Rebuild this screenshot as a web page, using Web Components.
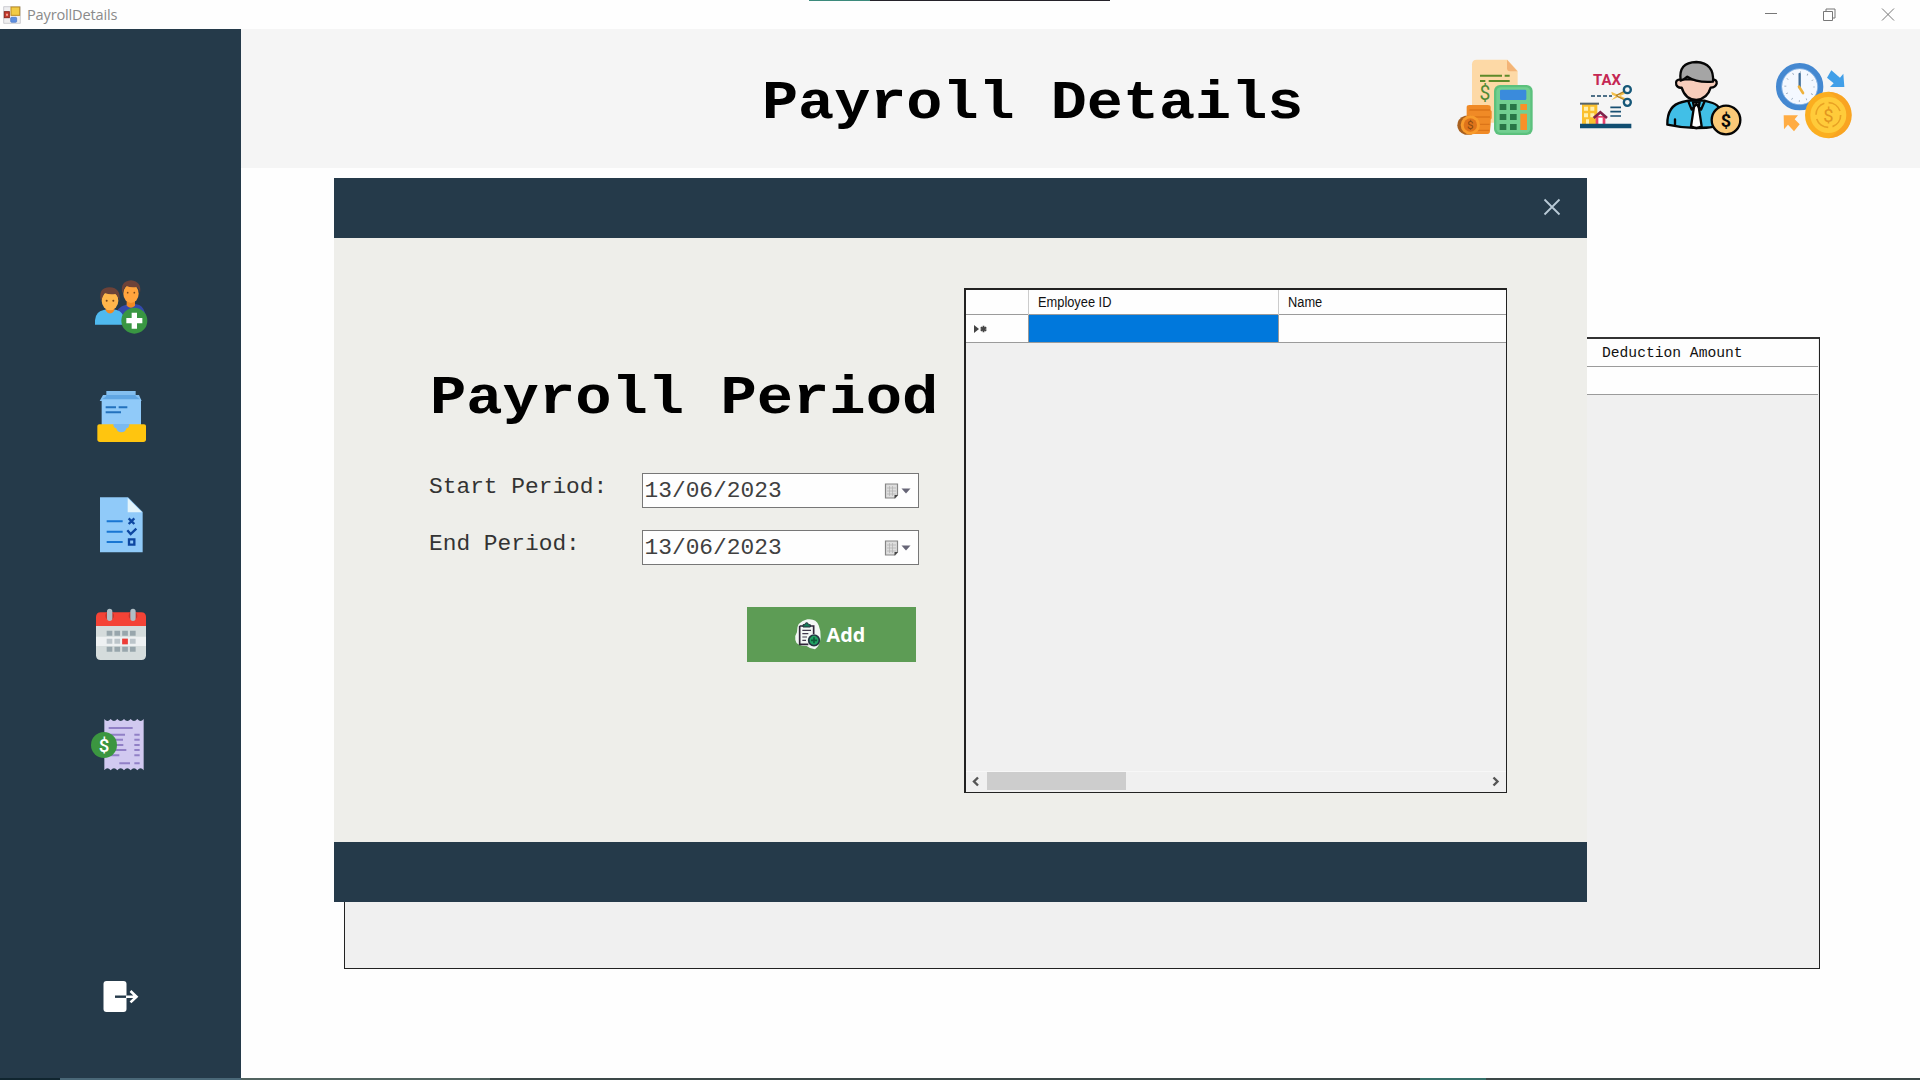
<!DOCTYPE html>
<html lang="en">
<head>
<meta charset="utf-8">
<title>PayrollDetails</title>
<style>
html,body{margin:0;width:1920px;height:1080px;overflow:hidden;background:#fefefe}
</style>
</head>
<body>
<payroll-app></payroll-app>
<script>
const define = (name, html) => customElements.define(name, class extends HTMLElement {
  constructor() {
    super();
    const t = document.createElement('template');
    t.innerHTML = html;
    this.attachShadow({mode: 'open'}).append(t.content.cloneNode(true));
  }
});

define('window-bar', `
<style>
:host{display:flex;align-items:center;height:29px;background:#fefefe;position:relative;box-sizing:border-box;padding-left:3px;font:14.6px/29px "Open Sans",sans-serif;color:#8a8a8a}
.logo{width:18px;height:18px;margin-right:6px}
.t{letter-spacing:-.17px}
.ctl{margin-left:auto;display:flex;margin-right:3px}
.edge{position:absolute;left:809px;top:0;width:301px;height:1px;background:linear-gradient(90deg,#3c8a7c 61px,#25222a 61px)}
</style>
<svg class="logo" viewBox="0 0 54 54"><path d="M2 2h50v50H2z" fill="#eeeef0" stroke="#b9b9c0" stroke-width="2"/><rect x="24" y="3" width="26" height="25" fill="#f1cb45" stroke="#bd8d23" stroke-width="3"/><rect x="4" y="17" width="15" height="18" fill="#c93a2c" stroke="#8b2a22" stroke-width="3"/><path d="M9 23h6v6H9z" fill="#f4a79a"/><rect x="23" y="34" width="18" height="15" rx="3" fill="#5e8fe0" stroke="#4774c4" stroke-width="2"/></svg>
<span class="t"><slot></slot></span>
<svg class="ctl" width="174" height="29" viewBox="0 0 174 29" fill="none" stroke="#777" stroke-width="1"><path d="M22 13.500h12M139 8.500l12 12M151 8.500l-12 12"/><path d="M80.500 11.500h9v9h-9zM83 11.500v-2.500h9v9h-2.500"/></svg>
<div class="edge"></div>`);

define('side-nav', `
<style>
:host{display:flex;flex-direction:column;width:241px;height:1051px;background:#253a4a;box-sizing:border-box;padding:223px 0 0 80px}
svg{display:block;width:90px;height:110px;flex:none}
.exit{margin-top:159px}
</style>
<svg viewBox="0 -24 270 330">
<path d="M108 188v-20q2-28 30-34l18-4 22 5q16 8 19 35z" fill="#3449ab"/>
<path d="M140 118h25v19q-12 12-25 0z" fill="#f18a25"/><ellipse cx="153" cy="101" rx="23" ry="28" fill="#ffa43d"/>
<path d="M127 100q-8-36 26-39 33 4 27 38-3-14-10-18-18 3-32-4-7 8-11 23z" fill="#6d4238"/>
<circle cx="143" cy="98" r="2.500" fill="#784719"/><circle cx="163" cy="98" r="2.500" fill="#784719"/>
<path d="M45 194v-13q2-27 26-31l19-4 20 4q20 5 24 31v13z" fill="#4fb9ef"/>
<path d="M77 138h26v14q-13 17-26 0z" fill="#f48921"/><ellipse cx="90" cy="122" rx="25" ry="29" fill="#ffb64b"/>
<path d="M63 123q-10-40 26-41 35 2 29 40-4-15-12-20-17 3-32-3-6 8-11 24z" fill="#6d4238"/>
<circle cx="80" cy="122" r="3" fill="#784719"/><circle cx="100" cy="122" r="3" fill="#784719"/>
<circle cx="163" cy="182" r="39" fill="#399642"/><path d="M155 158h16v16h16v16h-16v16h-16v-16h-16v-16h16z" fill="#fff"/>
</svg>
<svg viewBox="0 306 270 330">
<path d="M79 393h88v12h10l8 18H59l10-18h10z" fill="#83bff0"/><path d="M79 405h88v3l15 12H63l14-10z" fill="#60a6e3"/>
<path d="M65 418h118v84H65z" fill="#90caf9"/><path d="M52 498q0-5 6-5h134q6 0 6 5v40q0 8-8 8H60q-8 0-8-8z" fill="#ffc50f"/><path d="M100 492h48q0 12-9 13-2 12-15 12t-15-12q-9-1-9-13z" fill="#7ab9f0"/>
<path d="M77 442h31m8 0h26M77 457h46" stroke="#2372bd" stroke-width="6"/>
</svg>
<svg viewBox="0 -24 270 330">
<path d="M60 52h84l44 44v121H60z" fill="#90caf9"/><path d="M143 54v43h43z" fill="#e3f4fb"/>
<path d="M80 124h48M80 155h48M80 186h48" stroke="#1976d2" stroke-width="6"/>
<path d="M146 115l17 17m0-17-17 17M142 151l10 11 17-16M147 178h16v16h-16z" fill="none" stroke="#0d47a1" stroke-width="7"/>
</svg>
<svg viewBox="0 306 270 330">
<path d="M48 435h150v91q0 14-14 14H62q-14 0-14-14z" fill="#d5dcdc"/><path d="M48 470h150v28H48z" fill="#eef1f2"/>
<path d="M48 438v-27q0-14 14-14h122q14 0 14 14v27z" fill="#f44336"/>
<circle cx="89" cy="407" r="13" fill="#c5352d"/><circle cx="159" cy="407" r="13" fill="#c5352d"/>
<path d="M89 394v21M159 394v21" stroke="#b0bec5" stroke-width="16" stroke-linecap="round"/>
<path d="M80 460h87" stroke="#98a6ac" stroke-width="15" stroke-dasharray="17 6.300"/><path d="M80 484h87" stroke="#bcc5ca" stroke-width="15" stroke-dasharray="17 6.300"/><path d="M80 508h87" stroke="#98a6ac" stroke-width="15" stroke-dasharray="17 6.300"/><path d="M126.500 476h17v17h-17z" fill="#ee3c36"/>
</svg>
<svg viewBox="0 636 270 330">
<path d="M73 717q9 12 19 0 10 12 20 0 10 12 20 0 10 12 20 0 10 12 20 0 10 12 19 0v154q-9-12-19 0-10-12-20 0-10-12-20 0-10-12-20 0-10-12-20 0-10-12-19 0z" fill="#d1c9f0"/>
<path d="M86 744h72M90 764h45m28 0h16M100 779h29m34 0h16M105 795h25m33 0h16M100 810h39m24 0h16M92 826h26m45 0h16M118 850h32m13 0h16" stroke="#9180c6" stroke-width="6"/>
<circle cx="72" cy="795" r="39" fill="#3b9640"/><text x="72" y="815" text-anchor="middle" font-family="Roboto" font-weight="500" font-size="56" fill="#fff">$</text>
</svg>
<svg class="exit" viewBox="0 0 90 110">
<rect x="23.500" y="20" width="23" height="31" rx="3" fill="#fff"/><path d="M35 35.700h12" stroke="#253a4a" stroke-width="2.400"/><path d="M46 35.700h11M50.500 30l6 5.700-6 5.700" fill="none" stroke="#fff" stroke-width="2.600"/>
</svg>`);

define('page-header', `
<style>
:host{display:flex;height:139px;background:#f5f5f5;box-sizing:border-box;padding:0 50px 0 521px}
h1{margin:43px 0 0;font:bold 60.150px/60px "Liberation Mono",monospace;color:#000;white-space:pre;height:60px;transform:scaleY(.9);transform-origin:0 46px}
.icons{display:flex;margin-left:auto;padding-top:12px}
svg{display:block;height:110px}
</style>
<h1><slot></slot></h1>
<div class="icons">
<svg width="120" viewBox="0 0 360 330">
<path d="M96 70q0-14 14-14h92l31 34v155H96z" fill="#fdd9a6"/><path d="M201 56l31 35h-22q-9 0-9-9z" fill="#f3b477"/>
<path d="M120 104h66m8 0h15M120 120h16m10 0h63" stroke="#5d8a2a" stroke-width="6"/><text x="135" y="178" text-anchor="middle" font-family="Roboto" font-size="58" fill="#4f8a35">$</text>
<path d="M80 199q0-7 8-7h55q9 0 9 7v8l3 4v21l-3 4v14l-2 20q0 9-8 9H80z" fill="#f08a26"/><path d="M88 207h62M92 228h58M108 250h41M105 268h43" stroke="#dc7519" stroke-width="4"/>
<path d="M75 224h20v57H75q-23-7-23-28t23-29z" fill="#a8601f"/><circle cx="91" cy="252" r="29" fill="#f89b2b"/><circle cx="91" cy="252" r="20" fill="#df741b"/><text x="91" y="265" text-anchor="middle" font-family="Roboto" font-size="35" fill="#8a4b12">$</text>
<rect x="162" y="132" width="116" height="150" rx="18" fill="#5cc17d"/><rect x="169" y="139" width="102" height="136" rx="13" fill="#72cf91"/>
<rect x="180" y="146" width="79" height="31" rx="4" fill="#3a8bdc"/>
<path d="M179 189h20v18h-20zM210 189h20v18h-20zM179 219h20v18h-20zM210 219h20v18h-20zM179 249h20v18h-20zM210 249h20v18h-20z" fill="#287546"/><path d="M241 189h20v18h-20zM241 218h20v49h-20z" fill="#fa9128"/>
</svg>
<svg width="90" viewBox="360 0 270 330">
<text x="459" y="132" textLength="84" lengthAdjust="spacingAndGlyphs" font-family="Roboto" font-weight="bold" font-size="45" fill="#c52753">TAX</text>
<path d="M453 165h63" stroke="#174464" stroke-width="5" stroke-dasharray="12 6"/>
<path d="M514 152l41 19-2 6-37-16zM514 178l41-20-2-6-30 17z" fill="#f5c14b"/><path d="M528 164l25-13m-25 13 26 13" stroke="#b88527" stroke-width="4"/>
<circle cx="562" cy="146" r="10.500" fill="none" stroke="#155778" stroke-width="7"/><circle cx="562" cy="184" r="10.500" fill="none" stroke="#155778" stroke-width="7"/>
<path d="M426 189h46v62h-46z" fill="#fbc02d"/><path d="M420 188h57" stroke="#55646b" stroke-width="6"/><path d="M432 197h12v12h-12zM451 197h12v12h-12zM432 217h12v12h-12zM451 217h12v12h-12zM438 235h9v16h-9z" fill="#fff0b0"/>
<path d="M467 225h29v25h-29z" fill="#e8436c"/><path d="M461 231l20-17 20 17" fill="none" stroke="#7f234b" stroke-width="8"/><path d="M475 230h13v20h-13z" fill="#fff"/><path d="M420 255h154" stroke="#104d70" stroke-width="13"/><path d="M511 199h32M511 212h32M511 225h32" stroke="#174f72" stroke-width="5"/>
</svg>
<svg width="110" viewBox="0 0 330 330">
<g stroke="#050505" stroke-width="7" stroke-linejoin="round" stroke-linecap="round">
<path d="M52 251q-1-58 45-68l18-4h48l25 7q32 10 31 67-85 17-167-2z" fill="#41bfe7"/>
<path d="M129 184h20l-3 13 9 59q-16 10-32 0l9-59z" fill="#fff"/><path d="M115 181l10 25 14-17 14 17 11-25M75 235v18" fill="none"/>
<path d="M93 115q-19 0-14 17 5 10 16 8 11 36 44 37 33-3 43-37 14 0 18-12 2-13-15-13z" fill="#f7cdbb"/>
<path d="M92 119q-8-55 47-56 54 3 50 59-49 4-77-15-9 9-20 12z" fill="#a5a5a5"/>
<circle cx="228" cy="237" r="43" fill="#fac977"/></g>
<text x="228" y="257" text-anchor="middle" font-family="Roboto" font-weight="bold" font-size="54" fill="#080808">$</text>
</svg>
<svg width="110" viewBox="330 0 330 330">
<circle cx="449" cy="137" r="62" fill="#f4f8ff" stroke="#4488d1" stroke-width="18"/><circle cx="449" cy="137" r="54" fill="none" stroke="#a3c6ec" stroke-width="2"/>
<circle cx="449" cy="137" r="43" fill="none" stroke="#879aae" stroke-width="6" stroke-dasharray="2 20.500"/>
<path d="M449 99v40" stroke="#416f9b" stroke-width="7" stroke-linecap="round"/><path d="M447 137l12 19" stroke="#efb23c" stroke-width="8" stroke-linecap="round"/>
<path d="M544 88l26 22 10-12 3 40h-43l11-11-20-17z" fill="#419fe8"/><path d="M401 223h43l-10 12 15 15-17 21-18-20-12 14z" fill="#ffac43"/>
<circle cx="535" cy="222" r="70" fill="#fbae20"/><path d="M535 152a70 70 0 0 1 0 140q44-22 44-70t-44-70z" fill="#f79a22" opacity=".5"/><circle cx="535" cy="222" r="54" fill="#ffcb3a"/>
<circle cx="535" cy="222" r="37" fill="none" stroke="#e9a224" stroke-width="5" stroke-dasharray="45 13"/><text x="535" y="242" text-anchor="middle" font-family="Roboto" font-size="55" fill="#e29620">$</text>
</svg>
</div>`);

define('deduction-grid', `
<style>
:host{display:flex;flex-direction:column;box-sizing:border-box;width:1476px;height:632px;margin:169px 0 0 103px;border:1px solid #222;border-top:2px solid #333;background:#f0f0f0;font:14.650px/28px "Liberation Mono",monospace;color:#111}
.h{height:27px;background:#fefefe;border-bottom:1px solid #9b9b9b;display:flex;padding-left:1257px}
.r{height:27px;background:#fefefe;border-bottom:1px solid #9b9b9b}
.h,.r{margin-right:1px}
</style>
<div class="h"><slot></slot></div><div class="r"></div>`);

define('date-field', `
<style>
:host{display:flex;height:35px;font:22.850px/28px "Liberation Mono",monospace;color:#333}
.l,.v{white-space:pre;transform:scaleY(.93);transform-origin:0 20px;height:28px}
.l{width:212.500px}
.box{box-sizing:border-box;width:277px;height:35px;border:1px solid #777;background:#fefefe;display:flex;padding:3px 7px 0 2px}
.v{color:#404040}
svg{margin:5px 0 0 auto;width:27px;height:18px}
</style>
<span class="l"><slot></slot></span>
<div class="box"><span class="v"><slot name="value"></slot></span>
<svg viewBox="0 0 27 18"><path d="M1.500 2h12v11l-2.500 3h-9.500z" fill="#dedede" stroke="#858585" stroke-width="1.200"/><path d="M3 6h9M3 9h9M3 12h9M5.500 4v10M8.500 4v10" stroke="#b0b0b0" stroke-width=".7"/><path d="M14 13l-3.500 3.500v-3.500z" fill="#444"/><path d="M17.500 6.500h9l-4.500 5z" fill="#666576"/></svg></div>`);

define('add-button', `
<style>
:host{display:flex;align-items:center;width:169px;height:55px;background:#5d9c55;color:#fff;font:bold 19.800px/24px "Open Sans",sans-serif}
svg{margin-left:47px;width:29px;height:33px;margin-right:4px}
</style>
<svg viewBox="0 0 87 99"><path d="M40 4q27-3 34 18 7 17 6 36-2 26-17 36-13 0-25-10-31 0-34-18-3-12 5-24-2-31 31-38z" fill="#f3f7f5"/>
<path d="M17 24h42v24M17 24v55h26" fill="none" stroke="#30263a" stroke-width="5"/><path d="M27 27v-7h6q0-6 5-6t5 6h6v7z" fill="#167f5c" stroke="#253039" stroke-width="3"/><path d="M25 37h26M25 47h18M25 57h14M25 67h11" stroke="#40384c" stroke-width="3.500"/>
<circle cx="60" cy="67" r="16" fill="#20a263" stroke="#233642" stroke-width="5"/><path d="M60 58v18M51 67h18" stroke="#0d5a3a" stroke-width="5"/></svg><slot></slot>`);

define('employee-grid', `
<style>
:host{display:flex;flex-direction:column;box-sizing:border-box;width:543px;height:505px;border:1px solid #222;border-top:2px solid #222;border-left-width:2px;background:#f0f0f0;font:13.800px/25px "Liberation Sans",sans-serif;color:#111}
.row{display:grid;grid-template-columns:63px 250px 1fr;background:#fefefe;border-bottom:1px solid #9b9b9b}
.row>*{box-sizing:border-box;border-right:1px solid #999;padding-left:8.500px}
.h{height:24px}.h>*{border-right-color:#ccc}.row>:last-child{border-right:0}
.b{height:27px}.sel{background:#0078dc}
.n{transform:scaleX(.93);transform-origin:0 0}
.mark{display:flex;align-items:center;padding-left:8px!important}
.bar{margin-top:auto;height:21px;display:flex;align-items:flex-start;background:#f0f0f0;border-top:1px solid #f7f7f7;box-sizing:border-box}
.thumb{width:139px;height:18px;background:#cdcdcd}
.bar svg{width:21px;height:18px}.bar svg:last-child{margin-left:auto}
</style>
<div class="row h"><span></span><span><div class="n"><slot name="id"></slot></div></span><span><div class="n"><slot name="name"></slot></div></span></div>
<div class="row b"><span class="mark"><svg width="13" height="12" viewBox="0 0 13 12"><path d="M0 2l5 4-5 4z" fill="#444"/><path d="M9.500 2.800v6.400M6.700 4.400l5.600 3.200M12.300 4.400l-5.600 3.200" stroke="#444" stroke-width="1.800"/></svg></span><span class="sel"></span><span></span></div>
<div class="bar"><svg viewBox="0 0 21 18"><path d="M12 5.500l-4 4 4 4" fill="none" stroke="#555" stroke-width="2.400"/></svg><div class="thumb"></div><svg viewBox="0 0 21 18"><path d="M8.500 5.500l4 4-4 4" fill="none" stroke="#555" stroke-width="2.400"/></svg></div>`);

define('period-dialog', `
<style>
:host{position:absolute;left:334px;top:178px;width:1253px;height:724px;display:grid;grid-template-rows:60px 1fr 60px;background:#eeeeea}
.bar{background:#253a4a;display:flex;justify-content:flex-end;align-items:flex-start}
.bar svg{margin:20px 26px 0 0;width:18px;height:18px}
.body{display:flex}
.form{width:630px;box-sizing:border-box;padding:129px 0 0 95px;display:flex;flex-direction:column}
h2{margin:0 0 46px 1px;height:60px;font:bold 60.500px/60px "Liberation Mono",monospace;color:#000;white-space:pre;transform:scaleY(.9);transform-origin:0 46px}
date-field+date-field{margin-top:22px}
add-button{margin:42px 0 0 317.500px}
employee-grid{margin-top:50px}
</style>
<div class="bar"><svg viewBox="0 0 18 18"><path d="M1.500 1.500l15 15M16.500 1.500l-15 15" stroke="#b9cad7" stroke-width="1.800"/></svg></div>
<div class="body"><div class="form"><h2>Payroll Period</h2>
<date-field>Start Period:<span slot="value">13/06/2023</span></date-field>
<date-field>End Period:<span slot="value">13/06/2023</span></date-field>
<add-button>Add</add-button></div>
<employee-grid><span slot="id">Employee ID</span><span slot="name">Name</span></employee-grid></div>
<div class="bar"></div>`);

define('payroll-app', `
<style>
:host{display:flex;flex-direction:column;width:1920px;height:1080px;position:relative;background:#fefefe;overflow:hidden}
.main{display:flex;flex:1;min-height:0}
.content{flex:1;display:flex;flex-direction:column}
.task{position:absolute;left:0;right:0;bottom:0;height:2px;background:linear-gradient(90deg,#10252f 60px,#4a6878 60px 241px,#526460 241px 490px,#3c4848 490px 1420px,#36706a 1420px 1486px,#3c4848 1486px)}
</style>
<window-bar>PayrollDetails</window-bar>
<div class="main"><side-nav></side-nav>
<div class="content"><page-header>Payroll Details</page-header><deduction-grid>Deduction Amount</deduction-grid></div></div>
<period-dialog></period-dialog><div class="task"></div>`);
</script>
</body>
</html>
